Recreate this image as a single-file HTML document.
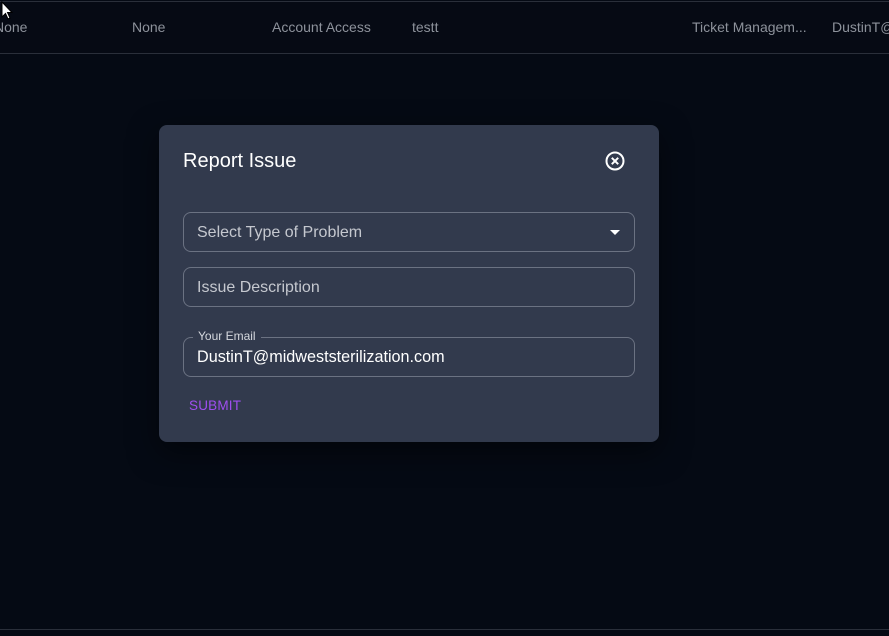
<!DOCTYPE html>
<html><head><meta charset="utf-8"><style>
*{box-sizing:border-box;margin:0;padding:0}
body{width:889px;height:636px;background:#050a14;font-family:"Liberation Sans",sans-serif;position:relative;overflow:hidden}
.bar{position:absolute;left:0;top:1px;width:889px;height:53px;border-top:1px solid #2a2f3a;border-bottom:1px solid #2a2f3a;background:#060a14}
.bar span{position:absolute;top:17px;font-size:14px;color:#8d929b;white-space:nowrap}
.bot{position:absolute;left:0;top:629px;width:889px;height:1px;background:#2a2f3a}
.modal{position:absolute;left:159px;top:125px;width:500px;height:317px;background:#323a4d;border-radius:8px;box-shadow:0 10px 30px rgba(0,0,0,.5)}
.title{position:absolute;left:24px;top:25px;font-size:20px;color:#fff}
.close{position:absolute;left:445px;top:25px}
.field{position:absolute;left:24px;width:452px;height:40px;border:1px solid #6b7282;border-radius:8px}
.field .t{position:absolute;left:13px;top:11px;font-size:16px;color:#c5c8cf}
.legend{position:absolute;left:9px;top:-9px;padding:0 5px;background:#323a4d;font-size:12px;color:#d5d8de}
.submit{position:absolute;left:30px;top:273px;font-size:13.5px;color:#9f4ef0;letter-spacing:.2px}
</style></head><body>
<div class="bar">
<span style="left:-6px">None</span>
<span style="left:132px">None</span>
<span style="left:272px">Account Access</span>
<span style="left:412px">testt</span>
<span style="left:692px">Ticket Managem...</span>
<span style="left:832px">DustinT@</span>
</div>
<svg style="position:absolute;left:1px;top:1px" width="12" height="20" viewBox="0 0 12 20"><path d="M1 1 L1 16 L4.5 12.5 L7 18 L9 17 L6.5 11.5 L11 11.5 Z" fill="#fff" stroke="#000" stroke-width="1"/></svg>
<div class="bot"></div>
<div class="modal">
<div class="title">Report Issue</div>
<svg class="close" width="22" height="22" viewBox="0 0 22 22"><circle cx="11" cy="11" r="8.5" fill="none" stroke="#fff" stroke-width="2"/><path d="M7.8 7.8 L14.2 14.2 M14.2 7.8 L7.8 14.2" stroke="#fff" stroke-width="2"/></svg>
<div class="field" style="top:87px"><div class="t">Select Type of Problem</div>
<svg style="position:absolute;left:426px;top:17px" width="10" height="5"><path d="M0 0 L10 0 L5 5 Z" fill="#fff"/></svg></div>
<div class="field" style="top:142px"><div class="t">Issue Description</div></div>
<div class="field" style="top:212px"><div class="legend">Your Email</div><div class="t" style="color:#fff;top:10px;font-size:16.2px">DustinT@midweststerilization.com</div></div>
<div class="submit">SUBMIT</div>
</div>
</body></html>
